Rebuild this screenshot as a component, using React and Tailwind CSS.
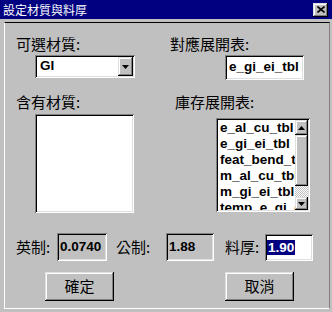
import React from "react";

const cjk = { fontFamily: '"Noto Sans CJK TC", "Noto Sans CJK SC", sans-serif' };
const lat = { fontFamily: '"Liberation Sans", Arial, sans-serif' };

const sunken =
  "shadow-[inset_1px_1px_0_#808080,inset_-1px_-1px_0_#ffffff,inset_2px_2px_0_#000000,inset_-2px_-2px_0_#dfdfdf]";
const raised =
  "shadow-[inset_-1px_-1px_0_#000000,inset_1px_1px_0_#dfdfdf,inset_-2px_-2px_0_#808080,inset_2px_2px_0_#ffffff]";

function Arrow({ up }) {
  return (
    <svg width="7" height="4" viewBox="0 0 7 4">
      {up ? (
        <polygon points="3.5,0 7,4 0,4" fill="#000" />
      ) : (
        <polygon points="0,0 7,0 3.5,4" fill="#000" />
      )}
    </svg>
  );
}

const items = [
  "e_al_cu_tbl",
  "e_gi_ei_tbl",
  "feat_bend_tbl",
  "m_al_cu_tbl",
  "m_gi_ei_tbl",
  "temp_e_gi_ei_tbl",
];

export default function App() {
  return (
    <div className="w-[332px] h-[312px] bg-[#c0c0c0] overflow-hidden text-black">
      {/* Title bar */}
      <div className="h-[19px] bg-[#000080] flex items-center justify-between pl-[3px] pr-[4px]">
        <span className="text-white text-[12px] leading-[19px]" style={cjk}>
          設定材質與料厚
        </span>
        <div className={`w-[15px] h-[14px] bg-[#c0c0c0] flex items-center justify-center ${raised}`}>
          <svg width="8" height="7" viewBox="0 0 8 7">
            <path d="M0.5 0.5 L7.5 6.5 M7.5 0.5 L0.5 6.5" stroke="#000" strokeWidth="1.6" />
          </svg>
        </div>
      </div>

      {/* Panel */}
      <div className="mt-[3px] ml-[4px] w-[326px] h-[287px] border-t border-t-black border-l border-l-white border-r border-r-[#808080] border-b border-b-white">
        {/* Row 1 labels */}
        <div className="pt-[11px] pl-[11px] flex h-[31px] items-end text-[15px] leading-[20px]" style={cjk}>
          <div className="w-[154px]">可選材質:</div>
          <div>對應展開表:</div>
        </div>

        {/* Row 2 controls */}
        <div className="mt-[1px] pl-[30px] flex items-start">
          <div className={`w-[100px] h-[23px] bg-white flex items-center justify-between pl-[5px] pr-[2px] ${sunken}`}>
            <span className="text-[13.5px] font-bold" style={lat}>GI</span>
            <div className={`w-[15px] h-[19px] bg-[#c0c0c0] flex items-center justify-center ${raised}`}>
              <Arrow />
            </div>
          </div>
          <div className={`ml-[90px] w-[79px] h-[25px] bg-white flex items-center pl-[4px] ${sunken}`}>
            <span className="text-[13.5px] font-bold" style={lat}>e_gi_ei_tbl</span>
          </div>
        </div>

        {/* Row 3 labels */}
        <div className="mt-[12px] pl-[11px] flex text-[15px] leading-[20px]" style={cjk}>
          <div className="w-[159px]">含有材質:</div>
          <div>庫存展開表:</div>
        </div>

        {/* Row 4 lists */}
        <div className="mt-[2px] pl-[30px] flex items-start">
          <div className={`w-[99px] h-[99px] bg-white ${sunken}`} />
          <div className={`ml-[82px] mt-[4px] w-[94px] h-[94px] bg-white flex p-[2px] ${sunken}`}>
            <div className="flex-1 overflow-hidden pl-[2px]">
              {items.map((t) => (
                <div key={t} className="text-[13.5px] font-bold leading-[16px] whitespace-nowrap" style={lat}>
                  {t}
                </div>
              ))}
            </div>
            <div className="w-[13px] flex flex-col">
              <div className={`h-[15px] bg-[#c0c0c0] flex items-center justify-center ${raised}`}>
                <Arrow up />
              </div>
              <div className={`h-[51px] bg-[#c0c0c0] ${raised}`} />
              <div className="flex-1 bg-[repeating-conic-gradient(#c0c0c0_0_25%,#ffffff_0_50%)] bg-[length:2px_2px]" />
              <div className={`h-[13px] bg-[#c0c0c0] flex items-center justify-center ${raised}`}>
                <Arrow />
              </div>
            </div>
          </div>
        </div>

        {/* Row 5 values */}
        <div className="mt-[20px] pl-[11px] flex items-center h-[28px]">
          <div className="w-[41px] text-[15px] leading-[20px]" style={cjk}>英制:</div>
          <div className={`w-[50px] h-[28px] flex items-center pl-[3px] ${sunken}`}>
            <span className="text-[13.5px] font-bold" style={lat}>0.0740</span>
          </div>
          <div className="ml-[9px] w-[50px] text-[15px] leading-[20px]" style={cjk}>公制:</div>
          <div className={`w-[48px] h-[28px] flex items-center pl-[3px] ${sunken}`}>
            <span className="text-[13.5px] font-bold" style={lat}>1.88</span>
          </div>
          <div className="ml-[11px] w-[40px] text-[15px] leading-[20px]" style={cjk}>料厚:</div>
          <div className={`w-[48px] h-[27px] bg-white flex items-center pl-[2px] ${sunken}`}>
            <span className="text-[13.5px] font-bold bg-[#000080] text-white leading-[15px] px-[1px]" style={lat}>1.90</span>
          </div>
        </div>

        {/* Row 6 buttons */}
        <div className="mt-[11px] pl-[40px] flex">
          <div className={`w-[69px] h-[29px] flex items-center justify-center text-[15px] ${raised}`} style={cjk}>
            確定
          </div>
          <div className={`ml-[111px] w-[69px] h-[29px] flex items-center justify-center text-[15px] ${raised}`} style={cjk}>
            取消
          </div>
        </div>
      </div>
    </div>
  );
}
